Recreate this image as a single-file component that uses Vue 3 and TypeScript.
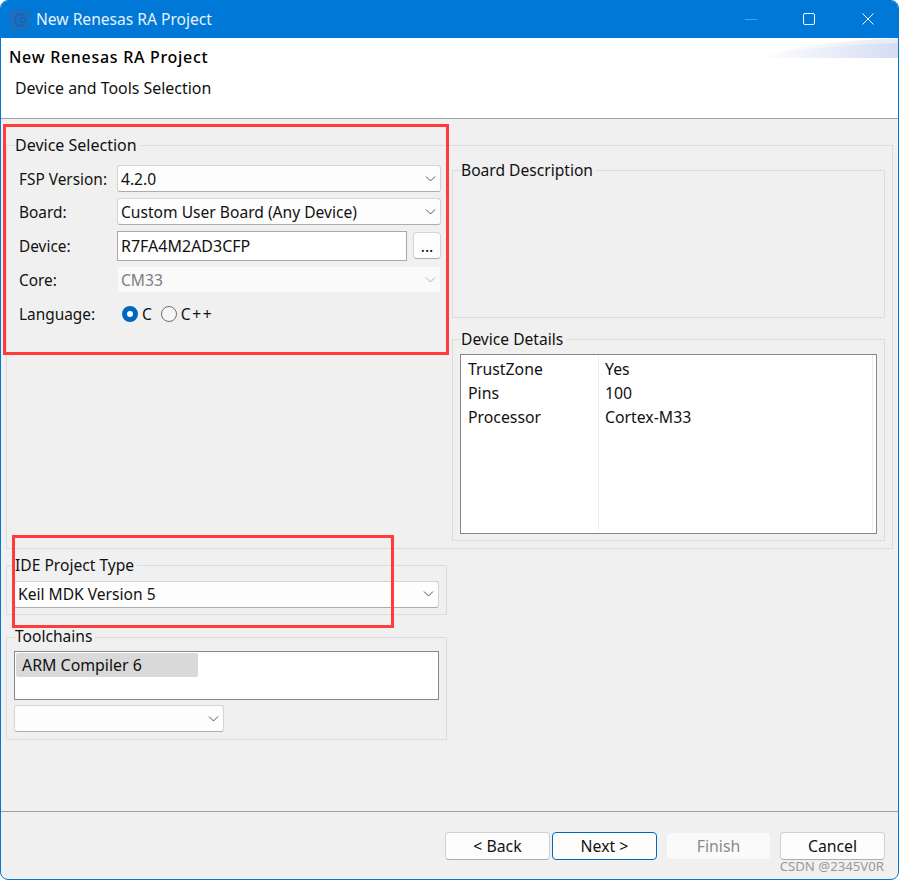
<script setup lang="ts">
const details: [string, string][] = [
  ['TrustZone', 'Yes'],
  ['Pins', '100'],
  ['Processor', 'Cortex-M33'],
]
</script>

<template>
  <div class="window">
    <div class="titlebar">
      <svg class="app-icon" width="20" height="20" viewBox="0 0 20 20">
        <rect width="20" height="20" fill="#1a6fc0" />
        <path d="M15 5.500a6 6 0 1 0 0 9" fill="none" stroke="#1366b6" stroke-width="2" />
        <circle cx="13" cy="10" r="2.500" fill="none" stroke="#1366b6" stroke-width="1.500" />
      </svg>
      <span class="title-text">New Renesas RA Project</span>
      <div class="win-controls">
        <svg width="12" height="12" viewBox="0 0 12 12" class="min"><path d="M0 6.500h12" stroke="#4f9fe3" fill="none" /></svg>
        <svg width="12" height="12" viewBox="0 0 12 12"><rect x=".5" y=".5" width="11" height="11" rx="1.500" stroke="#fff" fill="none" /></svg>
        <svg width="12" height="12" viewBox="0 0 12 12"><path d="M.5.5l11 11M11.500.5l-11 11" stroke="#fff" fill="none" /></svg>
      </div>
    </div>

    <div class="header">
      <svg class="banner" width="140" height="20" viewBox="0 0 140 20">
        <defs>
          <linearGradient id="sw" x1="0" x2="1" y1="0" y2="0">
            <stop offset="0" stop-color="#fff" />
            <stop offset="1" stop-color="#d5ddf3" />
          </linearGradient>
        </defs>
        <path d="M0 20C30 9 80 3 140 0V20Z" fill="url(#sw)" opacity=".6" />
        <path d="M0 20C30 12 80 7 140 5V20Z" fill="url(#sw)" />
      </svg>
      <div class="header-title">New Renesas RA Project</div>
      <div class="header-sub">Device and Tools Selection</div>
    </div>

    <div class="body">
      <div class="group outer">
        <span class="legend first">Device Selection</span>
        <div class="form">
          <label class="lbl">FSP Version:</label>
          <div class="combo"><span>4.2.0</span><svg class="chev" width="11" height="6" viewBox="0 0 11 6"><path d="M1 .5l4.500 4.500L10 .5" /></svg></div>
          <label class="lbl">Board:</label>
          <div class="combo"><span>Custom User Board (Any Device)</span><svg class="chev" width="11" height="6" viewBox="0 0 11 6"><path d="M1 .5l4.500 4.500L10 .5" /></svg></div>
          <label class="lbl">Device:</label>
          <div class="device-row">
            <div class="textbox">R7FA4M2AD3CFP</div>
            <div class="dots">...</div>
          </div>
          <label class="lbl">Core:</label>
          <div class="combo disabled"><span>CM33</span><svg class="chev" width="11" height="6" viewBox="0 0 11 6"><path d="M1 .5l4.500 4.500L10 .5" /></svg></div>
          <label class="lbl">Language:</label>
          <div class="radios">
            <span class="radio on"></span><span class="radio-text">C</span>
            <span class="radio"></span><span class="radio-text wide">C++</span>
          </div>
        </div>

        <div class="right">
          <div class="group board">
            <span class="legend">Board Description</span>
          </div>
          <div class="group details">
            <span class="legend">Device Details</span>
            <div class="table">
              <div v-for="row in details" :key="row[0]" class="row">
                <div class="c1">{{ row[0] }}</div>
                <div class="c2">{{ row[1] }}</div>
              </div>
              <i class="col-line a"></i>
              <i class="col-line b"></i>
            </div>
          </div>
        </div>
      </div>

      <div class="group ide">
        <span class="legend">IDE Project Type</span>
        <div class="combo"><span>Keil MDK Version 5</span><svg class="chev" width="11" height="6" viewBox="0 0 11 6"><path d="M1 .5l4.500 4.500L10 .5" /></svg></div>
      </div>

      <div class="group tools">
        <span class="legend">Toolchains</span>
        <div class="listbox"><div class="item">ARM Compiler 6</div></div>
        <div class="combo small"><span></span><svg class="chev" width="11" height="6" viewBox="0 0 11 6"><path d="M1 .5l4.500 4.500L10 .5" /></svg></div>
      </div>
    </div>

    <div class="footer">
      <div class="btn back">&lt; Back</div>
      <div class="btn primary">Next &gt;</div>
      <div class="btn off">Finish</div>
      <div class="btn">Cancel</div>
      <span class="watermark">CSDN @2345V0R</span>
    </div>

    <div class="mark m1"></div>
    <div class="mark m2"></div>
  </div>
</template>

<style>
html, body { margin: 0; background: #fff; }
</style>

<style scoped>
.window {
  position: relative;
  box-sizing: border-box;
  width: 899px;
  height: 880px;
  display: flex;
  flex-direction: column;
  border: 1px solid #0078d7;
  border-radius: 8px;
  overflow: hidden;
  background: #f0f0f0;
  color: #111;
  font: 15.6px/20px "Noto Sans", sans-serif;
}
.titlebar {
  flex: none;
  height: 37px;
  display: flex;
  align-items: center;
  padding-left: 9px;
  background: #0078d7;
}
.app-icon { flex: none; }
.title-text { margin-left: 6px; margin-top: -1px; color: #e8f2fb; }
.win-controls {
  margin-left: auto;
  margin-right: 24px;
  margin-top: -1px;
  display: flex;
  gap: 46px;
}
.win-controls svg { display: block; }
.win-controls svg:last-child { margin-left: 1px; }
.header {
  position: relative;
  flex: none;
  box-sizing: border-box;
  height: 81px;
  padding: 9px 0 0 8px;
  background: #fff;
  border-bottom: 1px solid #a0a0a0;
}
.banner { position: absolute; top: 0; right: 0; }
.header-title { font-size: 16px; font-weight: 500; color: #000; letter-spacing: .7px; }
.header-sub { margin: 11px 0 0 6px; font-size: 15.9px; }
.body {
  flex: none;
  box-sizing: border-box;
  height: 693px;
  padding: 26px 0 0 5px;
  border-bottom: 1px solid #a0a0a0;
}
.group {
  position: relative;
  box-sizing: border-box;
  border: 1px solid #dcdcdc;
}
.legend {
  position: absolute;
  top: -11px;
  left: 8px;
  padding-right: 3px;
  background: #f0f0f0;
}
.legend.first { font-size: 16px; }
.outer {
  width: 887px;
  height: 404px;
  display: flex;
  align-items: flex-start;
}
.form {
  flex: none;
  box-sizing: border-box;
  width: 445px;
  padding: 19px 0 0 12px;
  display: grid;
  grid-template-columns: 98px 324px;
  grid-template-rows: 27px 27px 29px 27px 30px;
  row-gap: 6px;
  align-items: center;
}
.lbl { white-space: nowrap; font-size: 15.4px; padding-top: 2px; }
.combo {
  box-sizing: border-box;
  height: 27px;
  display: flex;
  align-items: center;
  justify-content: space-between;
  padding: 0 4px 0 3px;
  background: #fdfdfd;
  border: 1px solid #d4d4d4;
  border-bottom-color: #adadad;
  border-radius: 3px;
}
.chev { flex: none; fill: none; stroke: #555; }
.combo.disabled { background: #fafafa; border-color: #f0f0f0; color: #7d7d7d; }
.combo.disabled .chev { stroke: #b4b4b4; }
.device-row { display: flex; align-items: center; gap: 6px; }
.textbox {
  box-sizing: border-box;
  flex: none;
  width: 290px;
  height: 30px;
  line-height: 28px;
  padding-left: 3px;
  font-size: 16px;
  background: #fff;
  border: 1px solid #a8a8a8;
}
.dots {
  box-sizing: border-box;
  width: 28px;
  height: 27px;
  line-height: 26px;
  text-align: center;
  background: #fdfdfd;
  border: 1px solid #d4d4d4;
  border-bottom-color: #adadad;
  border-radius: 4px;
}
.radios { display: flex; align-items: center; margin-left: 5px; }
.radio {
  box-sizing: border-box;
  width: 16px;
  height: 16px;
  border-radius: 50%;
  border: 1px solid #6e6e6e;
  background: #f6f6f6;
}
.radio.on { border: 5px solid #0067c0; background: #fff; }
.radio-text { margin: 0 9px 0 4px; }
.radio-text.wide { letter-spacing: 1.5px; }
.right {
  flex: none;
  display: flex;
  flex-direction: column;
  gap: 21px;
  width: 433px;
  margin: 24px 0 0 0;
}
.board { height: 148px; }
.details { height: 202px; padding: 14px 7px 0; }
.table {
  position: relative;
  box-sizing: border-box;
  height: 180px;
  padding-top: 2px;
  background: #fff;
  border: 1px solid #84878f;
  font-size: 15.8px;
}
.row { display: flex; height: 24px; line-height: 24px; }
.c1 { width: 137px; padding-left: 7px; box-sizing: border-box; }
.c2 { padding-left: 7px; }
.col-line { position: absolute; top: 0; bottom: 2px; width: 1px; background: #e6eefb; }
.col-line.a { left: 137px; }
.col-line.b { right: 3px; }
.ide {
  width: 441px;
  height: 50px;
  margin-top: 16px;
  padding: 15px 7px 0;
}
.ide .combo { padding-bottom: 1px; }
.tools {
  width: 441px;
  height: 103px;
  margin-top: 22px;
  padding: 13px 7px 0;
}
.tools .legend { top: -12px; }
.listbox {
  box-sizing: border-box;
  height: 49px;
  padding: 1px;
  background: #fff;
  border: 1px solid #84878f;
}
.item {
  width: 182px;
  height: 24px;
  line-height: 24px;
  padding-left: 6px;
  box-sizing: border-box;
  background: #d9d9d9;
  border-radius: 2px;
  font-size: 15.9px;
}
.small { width: 210px; margin-top: 5px; }
.footer {
  position: relative;
  flex: 1;
  display: flex;
  justify-content: flex-end;
  padding: 20px 13px 0 0;
  gap: 9px;
  font-size: 15.8px;
}
.btn {
  box-sizing: border-box;
  width: 105px;
  height: 28px;
  line-height: 26px;
  text-align: center;
  background: #fdfdfd;
  border: 1px solid #d0d0d0;
  border-bottom-color: #adadad;
  border-radius: 4px;
}
.btn.back { margin-right: -7px; }
.btn.primary { border-color: #0067c0; }
.btn.off { background: #fafafa; border-color: #f0f0f0; color: #8a8a8a; }
.watermark {
  position: absolute;
  right: 14px;
  bottom: 5px;
  font-size: 13.2px;
  line-height: 15px;
  color: #9a9a9a;
}
.mark {
  position: absolute;
  box-sizing: border-box;
  border: 3px solid #ff3b3b;
}
.m1 { left: 2px; top: 123px; width: 446px; height: 231px; }
.m2 { left: 11px; top: 534px; width: 382px; height: 93px; }
</style>
